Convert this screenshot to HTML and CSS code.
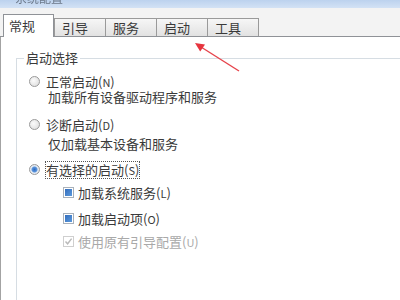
FILE: index.html
```html
<!DOCTYPE html>
<html lang="zh-CN">
<head>
    <meta charset="UTF-8">
    <title>系统配置</title>
    <link rel="stylesheet" href="styles.css">
</head>
<body>
    <div class="window">
        <div class="titlebar"><span class="title">系统配置</span></div>

        <div class="tabs">
            <div class="tab active">常规</div>
            <div class="tab">引导</div>
            <div class="tab">服务</div>
            <div class="tab">启动</div>
            <div class="tab">工具</div>
        </div>

        <div class="panel">
            <fieldset class="group">
                <legend>启动选择</legend>

                <div class="option first">
                    <span class="radio"></span>
                    <span>正常启动(<u>N</u>)</span>
                </div>
                <div class="hint">加载所有设备驱动程序和服务</div>

                <div class="option second">
                    <span class="radio"></span>
                    <span>诊断启动(<u>D</u>)</span>
                </div>
                <div class="hint">仅加载基本设备和服务</div>

                <div class="option third">
                    <span class="radio checked"></span>
                    <span class="focus">有选择的启动(<u>S</u>)</span>
                </div>

                <div class="check c1">
                    <span class="box filled"></span>
                    <span>加载系统服务(<u>L</u>)</span>
                </div>
                <div class="check c2">
                    <span class="box filled"></span>
                    <span>加载启动项(<u>O</u>)</span>
                </div>
                <div class="check c3 disabled">
                    <span class="box">
                        <svg width="9" height="9" viewBox="0 0 9 9"><path d="M1.5 4.5 L3.6 6.8 L7.6 1.6" fill="none" stroke="#b9b9b9" stroke-width="1.4"/></svg>
                    </span>
                    <span>使用原有引导配置(<u>U</u>)</span>
                </div>
            </fieldset>
        </div>

        <!-- red annotation arrow pointing at the 启动 tab -->
        <svg class="arrow" width="400" height="300" viewBox="0 0 400 300">
            <line x1="239" y1="71" x2="201" y2="47" stroke="#e6434b" stroke-width="1.4"/>
            <polygon points="195,43 205,44.4 200.2,51.6" fill="#e6343e"/>
        </svg>
    </div>
</body>
</html>
```

FILE: styles.css
```css
* {
    box-sizing: border-box;
}

body {
    margin: 0;
    width: 400px;
    height: 300px;
    overflow: hidden;
    background: #fff;
    font-family: "Noto Sans CJK SC", "Noto Sans", sans-serif;
    font-size: 13px;
    color: #3a3a3a;
}

.window {
    position: relative;
    height: 300px;
    display: flex;
    flex-direction: column;
}

.titlebar {
    flex-shrink: 0;
    height: 8px;
    overflow: hidden;
    background: linear-gradient(#bcd2ee, #d3e2f5);
    padding-left: 15px;
}

.title {
    display: block;
    margin-top: -10px;
    line-height: 16px;
    font-size: 12px;
    color: #6b7889;
    filter: blur(0.6px);
}

/* tab strip */
.tabs {
    flex-shrink: 0;
    height: 29px;
    display: flex;
    align-items: flex-end;
    padding-left: 3px;
    background: #f3f3f3;
    border-bottom: 1px solid #8f9297;
}

.tab {
    width: 52px;
    height: 18px;
    margin-left: -1px;
    padding-left: 7px;
    display: flex;
    align-items: center;
    line-height: 16px;
    border: 1px solid #9a9a9a;
    border-bottom: none;
    background: linear-gradient(#f6f6f6, #e2e2e2);
}

.tab.active {
    width: 51px;
    height: 23px;
    margin-left: 0;
    margin-right: 1px;
    padding-left: 5px;
    margin-bottom: -1px;
    background: #fff;
    border-color: #8f9297;
    position: relative;
    z-index: 1;
}

/* content panel */
.panel {
    flex: 1;
    min-height: 0;
    display: flex;
    flex-direction: column;
    background: #fff;
    border-left: 1px solid #a3a3a3;
}

.group {
    flex: 1;
    min-width: 0;
    margin: 13px 0 0 15px;
    padding: 0 0 0 7px;
    border: 1px solid #d6dde3;
    border-right: none;
    border-bottom: none;
}

.group legend {
    padding: 0 2px;
    line-height: 16px;
    color: #3a3a3a;
}

.option,
.check,
.hint {
    display: flex;
    align-items: center;
    height: 15px;
    line-height: 15px;
    white-space: nowrap;
}

.option {
    margin-left: 5px;
    gap: 6px;
}

.option.first { margin-top: 8px; }
.option.second { margin-top: 13px; }
.option.third { margin-top: 11px; }

.hint {
    margin-left: 24px;
}

.option.second + .hint { margin-top: 4px; }

.check {
    margin-left: 39px;
    gap: 4px;
}

.check.c1 { margin-top: 8px; }
.check.c2 { margin-top: 11px; }
.check.c3 { margin-top: 8px; }

.check.disabled {
    color: #a9a9a9;
}

u {
    text-decoration: none;
    font-size: 11px;
}

.radio {
    width: 11px;
    height: 11px;
    border-radius: 50%;
    border: 1px solid #9a9a9a;
    background: radial-gradient(circle at 40% 40%, #fbfbfb, #d9d9d9);
    flex-shrink: 0;
}

.radio.checked {
    background: radial-gradient(circle, #2e6bc2 0, #5b95dc 2.5px, #e9eef5 3.5px, #d4d8de 100%);
}

.focus {
    outline: 1px dotted #555;
    outline-offset: 0;
}

.box {
    width: 11px;
    height: 11px;
    border: 1px solid #a9b1ba;
    background: #fff;
    flex-shrink: 0;
    display: flex;
    align-items: center;
    justify-content: center;
}

.box.filled {
    padding: 1px;
    background-clip: content-box;
    background-image: linear-gradient(135deg, #2c66b8, #62a0e0);
}

.check.disabled .box {
    border-color: #cfcfcf;
}

.arrow {
    position: absolute;
    top: 0;
    left: 0;
    pointer-events: none;
}
```
